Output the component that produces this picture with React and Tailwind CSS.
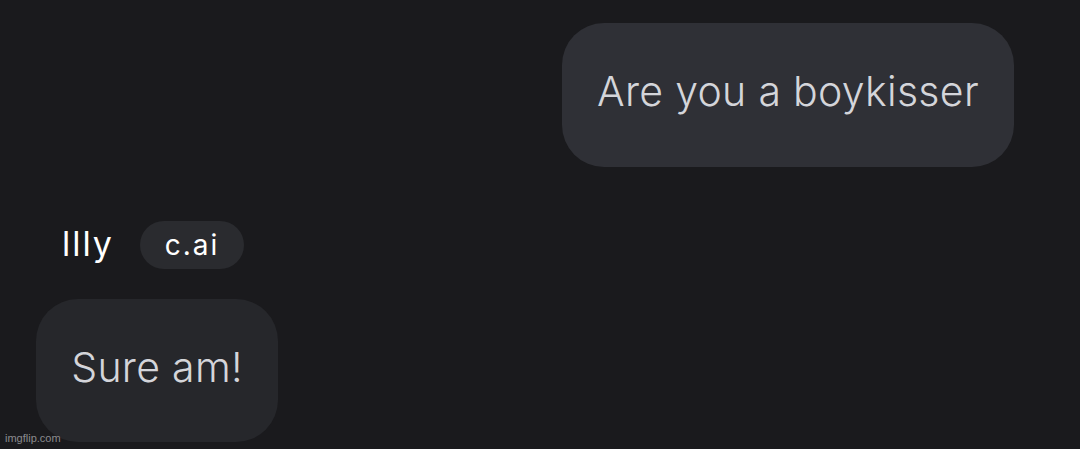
export default function App() {
  return (
    <div className="relative w-[1080px] h-[449px] overflow-hidden bg-[#1a1a1d]" style={{ fontFamily: 'Inter, "Noto Sans", sans-serif' }}>
      <div className="flex flex-col pt-[23px]">
        <div className="flex justify-end pr-[66px]">
          <div className="h-[144px] w-[452px] rounded-[42px] bg-[#2f3036] flex items-center justify-center pb-[7px]">
            <span className="text-[41px] font-light text-[#d4d5da] leading-none tracking-[0.3px]">Are you a boykisser</span>
          </div>
        </div>
        <div className="flex items-center pl-[62px] mt-[54px] gap-[26px]">
          <span className="text-[34px] text-white leading-none tracking-[2px] pb-[2px]">llly</span>
          <span className="h-[48px] w-[104px] rounded-full bg-[#2a2b2f] flex items-center justify-center text-[28px] text-white leading-none tracking-[2px]">c.ai</span>
        </div>
        <div className="pl-[36px] mt-[30px]">
          <div className="h-[143px] w-[242px] rounded-[42px] bg-[#26272b] flex items-center justify-center pb-[6px]">
            <span className="text-[41px] font-light text-[#d4d5da] leading-none tracking-[0.3px]">Sure am!</span>
          </div>
        </div>
      </div>
      <span className="absolute left-[5px] bottom-[3px] text-[11px] text-[#8a8a8e]" style={{ fontFamily: '"Liberation Sans", sans-serif' }}>imgflip.com</span>
    </div>
  );
}
